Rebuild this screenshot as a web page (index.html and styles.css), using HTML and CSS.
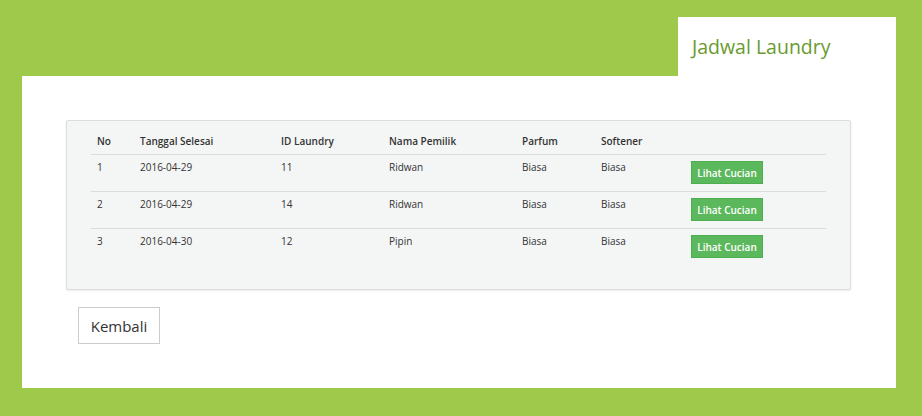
FILE: index.html
```html
<!DOCTYPE html>
<html>
<head>
<meta charset="utf-8">
<link rel="stylesheet" href="styles.css">
</head>
<body>
<div class="page">
  <div class="tabs">
    <div class="tab"><h1 class="title">Jadwal Laundry</h1></div>
  </div>
  <div class="panel">
    <div class="card">
      <table class="table">
        <thead>
          <tr>
            <th class="c-no">No</th>
            <th class="c-date">Tanggal Selesai</th>
            <th class="c-id">ID Laundry</th>
            <th class="c-name">Nama Pemilik</th>
            <th class="c-parfum">Parfum</th>
            <th class="c-soft">Softener</th>
            <th class="c-act"></th>
          </tr>
        </thead>
        <tbody>
          <tr>
            <td>1</td><td>2016-04-29</td><td>11</td><td>Ridwan</td><td>Biasa</td><td>Biasa</td>
            <td><button class="btn-green">Lihat Cucian</button></td>
          </tr>
          <tr>
            <td>2</td><td>2016-04-29</td><td>14</td><td>Ridwan</td><td>Biasa</td><td>Biasa</td>
            <td><button class="btn-green">Lihat Cucian</button></td>
          </tr>
          <tr class="last">
            <td>3</td><td>2016-04-30</td><td>12</td><td>Pipin</td><td>Biasa</td><td>Biasa</td>
            <td><button class="btn-green">Lihat Cucian</button></td>
          </tr>
        </tbody>
      </table>
    </div>
    <button class="btn-back">Kembali</button>
  </div>
</div>
</body>
</html>
```

FILE: styles.css
```css
* { box-sizing: border-box; }
html, body {
  margin: 0;
  padding: 0;
  background: #9fc94b;
  font-family: "Open Sans", "Noto Sans", sans-serif;
  color: #333;
}
.page {
  width: 922px;
  height: 416px;
  padding: 17px 26px 28px 22px;
  display: flex;
  flex-direction: column;
}
.tabs {
  display: flex;
  justify-content: flex-end;
}
.tab {
  width: 218px;
  height: 59px;
  background: #fff;
  padding: 0 0 0 14px;
}
.title {
  margin: 0;
  font-size: 19.5px;
  font-weight: 400;
  line-height: 60px;
  color: #6a9a30;
}
.panel {
  flex: 1;
  background: #fff;
  padding: 44px 45px 0 44px;
}
.card {
  background: #f4f6f5;
  border: 1px solid #dcdede;
  border-radius: 2px;
  box-shadow: 0 1px 2px rgba(0,0,0,0.08);
  padding: 7px 24px 24px 24px;
}
.table {
  width: 100%;
  border-collapse: collapse;
  table-layout: fixed;
  font-size: 10px;
}
.table th, .table td {
  text-align: left;
  vertical-align: top;
  padding: 6px 6px;
  line-height: 14px;
}
.table th {
  font-weight: 600;
  border-bottom: 1px solid #dcdcdc;
  padding-bottom: 6px;
}
.table td {
  padding-top: 5px;
  padding-bottom: 8px;
  border-bottom: 1px solid #dcdcdc;
}
.table td:last-child { padding-top: 6px; padding-bottom: 7px; }
.table tr.last td { border-bottom: none; }
.c-no { width: 43px; }
.c-date { width: 141px; }
.c-id { width: 108px; }
.c-name { width: 133px; }
.c-parfum { width: 79px; }
.c-soft { width: 90px; }
.btn-green {
  display: block;
  width: 72px;
  height: 23px;
  padding: 0;
  background: #5cb85c;
  border: 1px solid #4cae4c;
  color: #fff;
  font-family: inherit;
  font-size: 10px;
  font-weight: 600;
  border-radius: 0;
}
.btn-back {
  margin: 17px 0 0 12px;
  width: 82px;
  height: 37px;
  background: #fff;
  border: 1px solid #ccc;
  border-radius: 0;
  font-family: inherit;
  font-size: 15px;
  color: #333;
  padding: 0;
}
```
